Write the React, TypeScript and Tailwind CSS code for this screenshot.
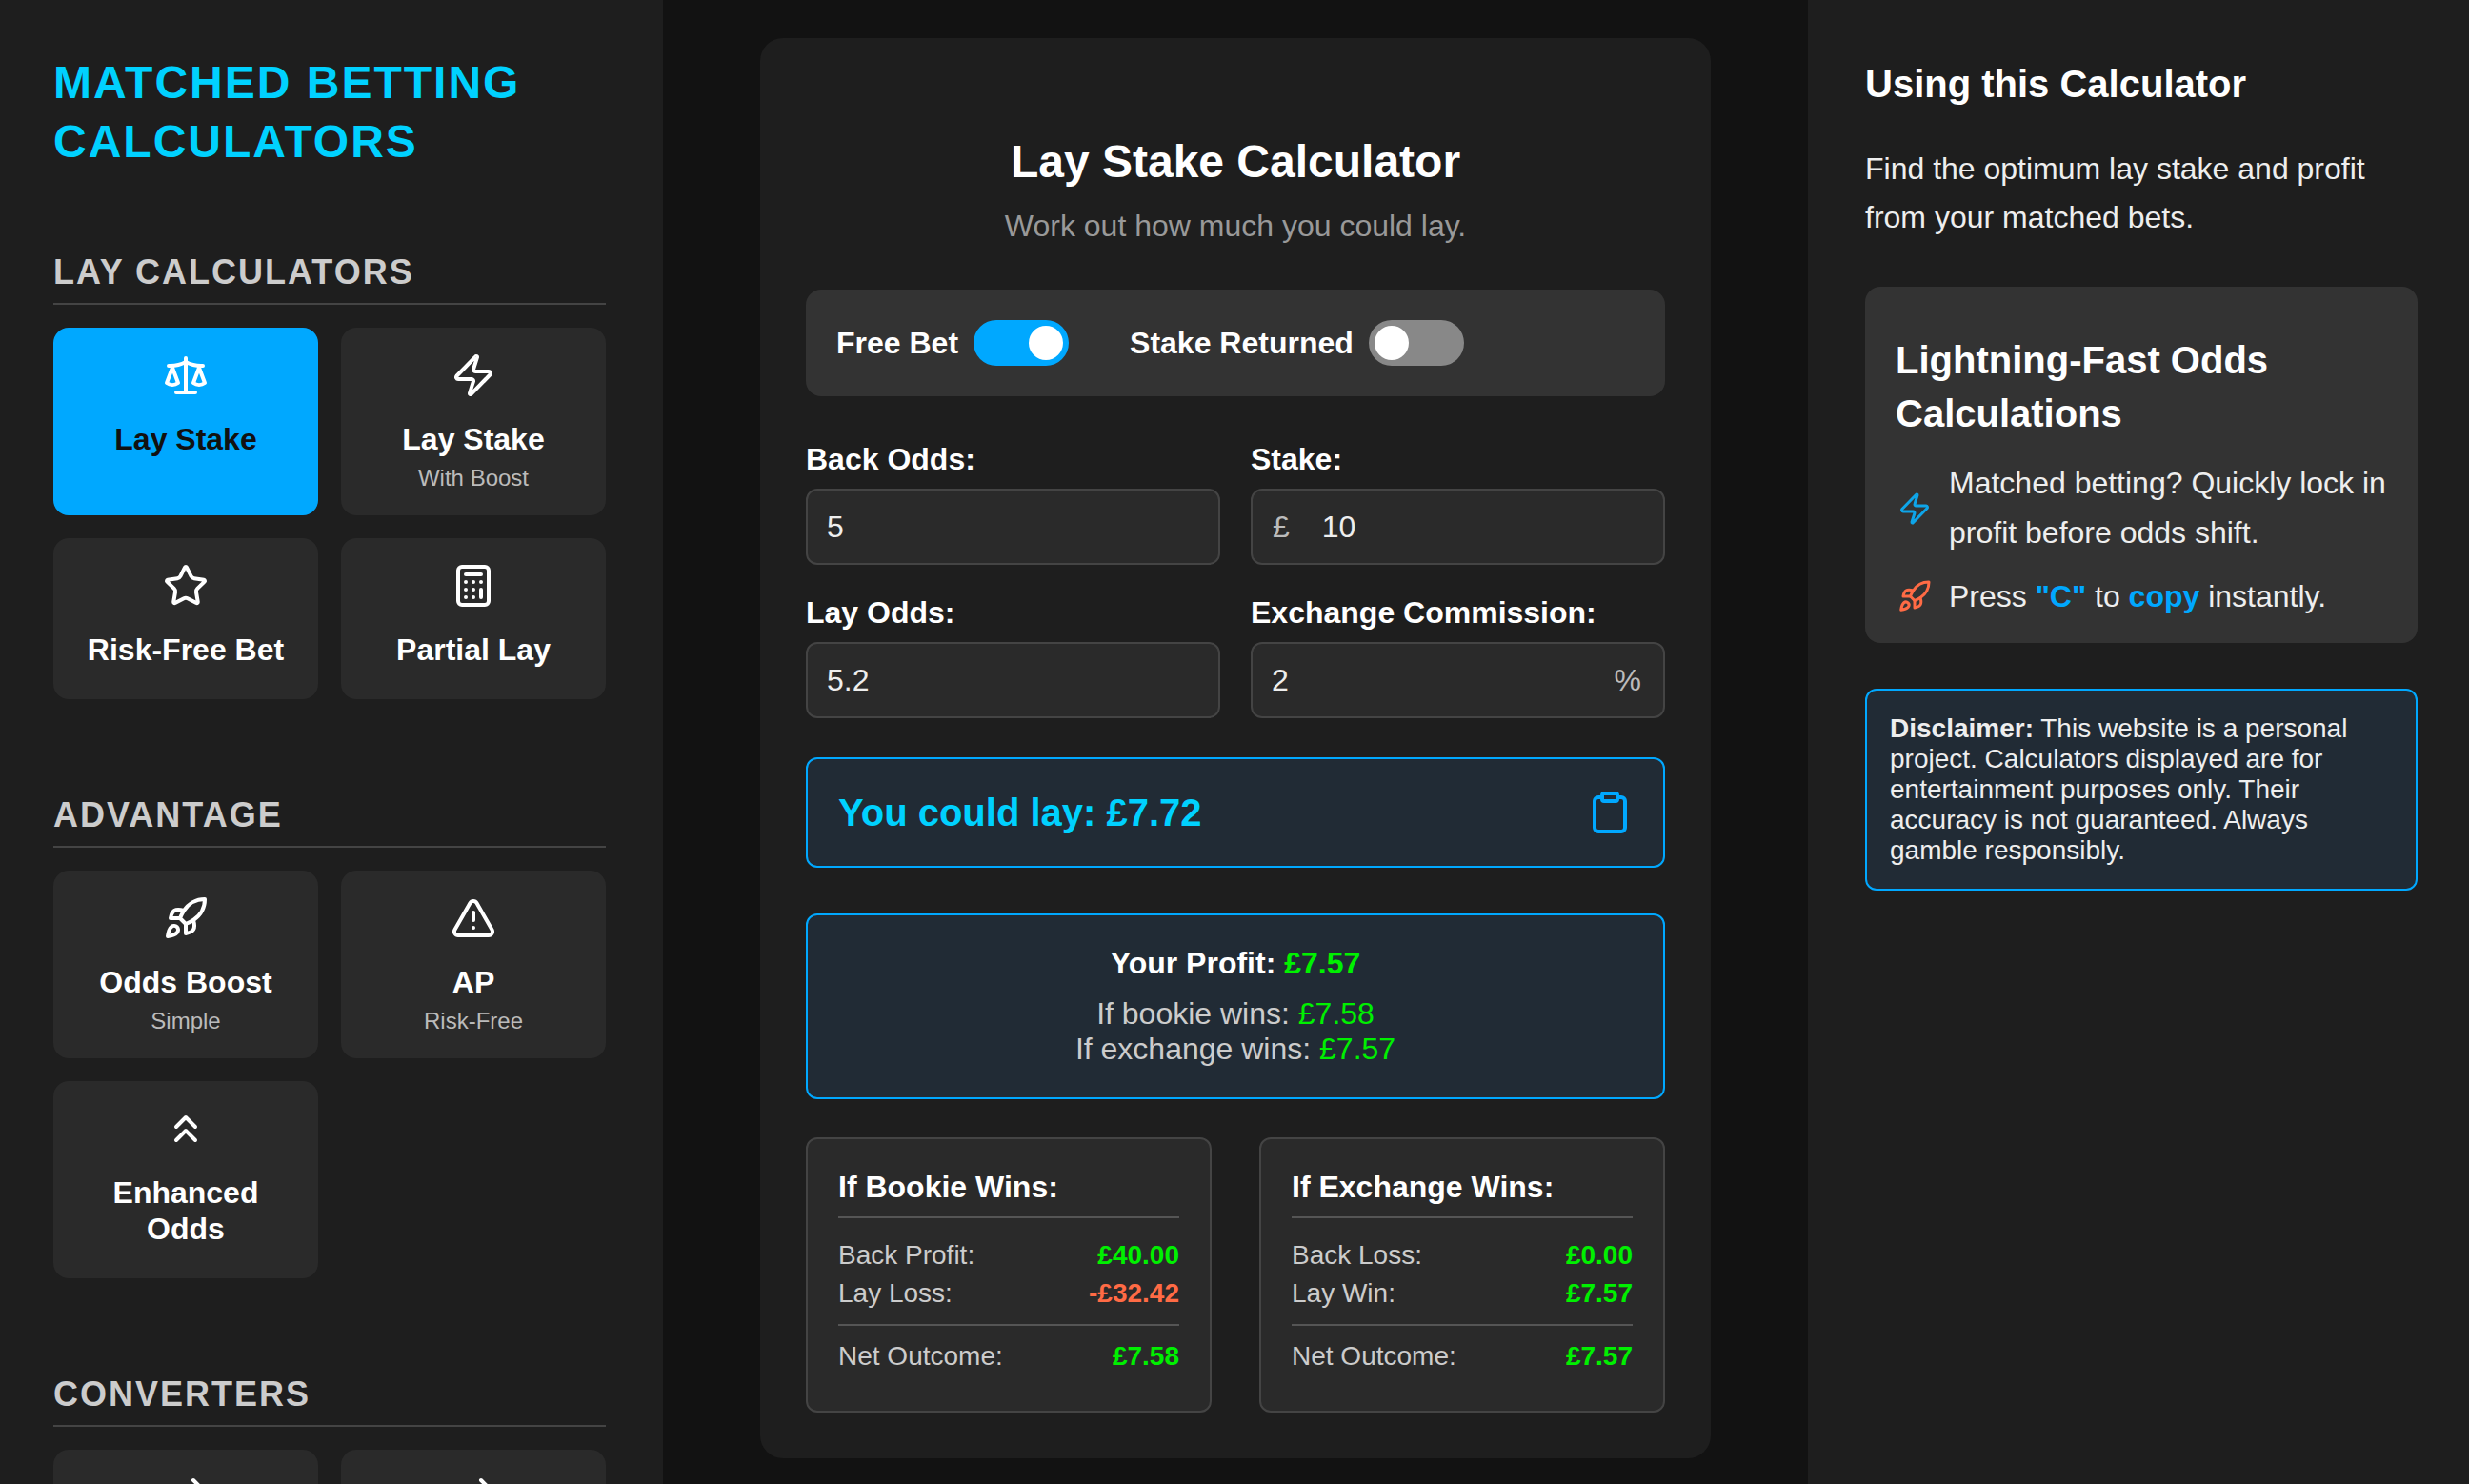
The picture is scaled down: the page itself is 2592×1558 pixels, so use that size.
import React from 'react'
import {
  ArrowRightLeft, Calculator, ChevronsUp, Clipboard, Rocket, Scale, Star, TriangleAlert, Zap,
} from 'lucide-react'

interface NavItem {
  label: string
  sub?: string
  icon: React.ReactNode
  active?: boolean
}

const navIcon = 'h-12 w-12'

const sections: { title: string; items: NavItem[] }[] = [
  {
    title: 'LAY CALCULATORS',
    items: [
      { label: 'Lay Stake', icon: <Scale className={navIcon} />, active: true },
      { label: 'Lay Stake', sub: 'With Boost', icon: <Zap className={navIcon} /> },
      { label: 'Risk-Free Bet', icon: <Star className={navIcon} /> },
      { label: 'Partial Lay', icon: <Calculator className={navIcon} /> },
    ],
  },
  {
    title: 'ADVANTAGE',
    items: [
      { label: 'Odds Boost', sub: 'Simple', icon: <Rocket className={navIcon} /> },
      { label: 'AP', sub: 'Risk-Free', icon: <TriangleAlert className={navIcon} /> },
      { label: 'Enhanced Odds', icon: <ChevronsUp className={navIcon} /> },
    ],
  },
  {
    title: 'CONVERTERS',
    items: [
      { label: 'Odds', sub: 'Converter', icon: <ArrowRightLeft className={navIcon} /> },
      { label: 'Stake', sub: 'Converter', icon: <ArrowRightLeft className={navIcon} /> },
    ],
  },
]

function NavCard({ item }: { item: NavItem }) {
  return (
    <div
      className={`flex flex-col items-center rounded-2xl px-5 pt-[26px] pb-[33px] text-center ${
        item.active ? 'bg-[#00a8ff] text-[#111111]' : 'bg-[#2a2a2a] text-white'
      }`}
    >
      <span className={`mb-6 ${item.active ? 'text-white' : ''}`}>{item.icon}</span>
      <span className="text-[32px] leading-[38px] font-bold">{item.label}</span>
      {item.sub && <span className="mt-2 -mb-[7px] text-2xl leading-[27px] text-[#bbbbbb]">{item.sub}</span>}
    </div>
  )
}

function Sidebar() {
  return (
    <aside className="h-full w-[696px] shrink-0 overflow-hidden bg-[#1e1e1e] pt-14 pr-[60px] pl-14">
      <h1 className="text-5xl leading-[62px] font-bold tracking-[2px] text-[#00d1ff]">
        MATCHED BETTING CALCULATORS
      </h1>
      <div className="mt-[85px] flex flex-col gap-[101px]">
        {sections.map((s) => (
          <section key={s.title}>
            <h2 className="mb-6 border-b-2 border-[#444444] pb-3 text-4xl leading-[41px] font-bold tracking-[2px] text-[#cccccc]">
              {s.title}
            </h2>
            <div className="grid grid-cols-2 gap-6">
              {s.items.map((item) => (
                <NavCard key={item.label + (item.sub ?? '')} item={item} />
              ))}
            </div>
          </section>
        ))}
      </div>
    </aside>
  )
}

function Toggle({ on }: { on: boolean }) {
  return (
    <span className={`flex h-12 w-[100px] items-center rounded-full px-[6px] ${on ? 'justify-end bg-[#00a8ff]' : 'bg-[#888888]'}`}>
      <span className="h-9 w-9 rounded-full bg-white" />
    </span>
  )
}

function Field({ label, value, prefix, suffix }: { label: string; value: string; prefix?: string; suffix?: string }) {
  return (
    <div>
      <label className="mb-3 block text-[32px] leading-[37px] font-bold text-white">{label}</label>
      <div className="flex h-20 items-center rounded-xl border-2 border-[#444444] bg-[#2a2a2a] px-5 text-[32px] text-[#eeeeee]">
        {prefix && <span className="mr-[34px] ml-px text-[#bbbbbb]">{prefix}</span>}
        <input readOnly value={value} aria-label={label} className="w-full min-w-0 bg-transparent outline-none" />
        {suffix && <span className="mr-[3px] text-[#bbbbbb]">{suffix}</span>}
      </div>
    </div>
  )
}

function OutcomeRow({ label, value, loss }: { label: string; value: string; loss?: boolean }) {
  return (
    <div className="flex justify-between py-1 text-[28px] leading-8">
      <span className="text-[#cccccc]">{label}</span>
      <span className={`font-bold ${loss ? 'text-[#ff6b45]' : 'text-[#00f000]'}`}>{value}</span>
    </div>
  )
}

function OutcomeCard({ title, rows, net }: { title: string; rows: { label: string; value: string; loss?: boolean }[]; net: string }) {
  return (
    <div className="rounded-xl border-2 border-[#444444] bg-[#2a2a2a] px-8 pt-8 pb-[37px]">
      <h3 className="border-b-2 border-[#555555] pb-3 text-[32px] leading-[37px] font-bold text-white">{title}</h3>
      <div className="mt-[19px] border-b-2 border-[#555555] pb-3">
        {rows.map((r) => (
          <OutcomeRow key={r.label} {...r} />
        ))}
      </div>
      <div className="mt-3">
        <OutcomeRow label="Net Outcome:" value={net} />
      </div>
    </div>
  )
}

function Main() {
  return (
    <main className="h-full flex-1 overflow-hidden bg-[#121212] pt-10">
      <div className="mx-auto w-[998px] rounded-[24px] bg-[#1e1e1e] px-12 pt-[102px] pb-12">
        <h2 className="text-center text-5xl leading-[55px] font-bold text-white">Lay Stake Calculator</h2>
        <p className="mt-[22px] text-center text-[32px] leading-[37px] text-[#999999]">Work out how much you could lay.</p>

        <div className="mt-12 flex h-28 items-center rounded-2xl bg-[#333333] px-8 text-[32px] font-bold text-white">
          <span className="mr-4">Free Bet</span>
          <Toggle on />
          <span className="mr-4 ml-16">Stake Returned</span>
          <Toggle on={false} />
        </div>

        <div className="mt-12 grid grid-cols-2 gap-x-8 gap-y-8">
          <Field label="Back Odds:" value="5" />
          <Field label="Stake:" value="10" prefix="£" />
          <Field label="Lay Odds:" value="5.2" />
          <Field label="Exchange Commission:" value="2" suffix="%" />
        </div>

        <div className="mt-[41px] flex h-[116px] items-center justify-between rounded-xl border-2 border-[#00a8ff] bg-[#212b35] pr-8 pl-8">
          <span className="text-[40px] font-bold text-[#00d1ff]">You could lay: £7.72</span>
          <Clipboard className="h-12 w-12 text-[#00a8ff]" />
        </div>

        <div className="mt-12 rounded-xl border-2 border-[#00a8ff] bg-[#212b35] p-8 text-center">
          <p className="text-[32px] leading-[37px] font-bold text-white">
            Your Profit: <span className="text-[#00f000]">£7.57</span>
          </p>
          <p className="mt-4 text-[32px] leading-[37px] text-[#cccccc]">
            If bookie wins: <span className="text-[#00f000]">£7.58</span>
          </p>
          <p className="text-[32px] leading-[37px] text-[#cccccc]">
            If exchange wins: <span className="text-[#00f000]">£7.57</span>
          </p>
        </div>

        <div className="mt-10 grid grid-cols-2 gap-x-[50px]">
          <OutcomeCard
            title="If Bookie Wins:"
            rows={[
              { label: 'Back Profit:', value: '£40.00' },
              { label: 'Lay Loss:', value: '-£32.42', loss: true },
            ]}
            net="£7.58"
          />
          <OutcomeCard
            title="If Exchange Wins:"
            rows={[
              { label: 'Back Loss:', value: '£0.00' },
              { label: 'Lay Win:', value: '£7.57' },
            ]}
            net="£7.57"
          />
        </div>
      </div>
    </main>
  )
}

function InfoPanel() {
  return (
    <aside className="h-full w-[694px] shrink-0 overflow-hidden bg-[#1e1e1e] pt-[65px] pr-[54px] pl-[60px]">
      <h2 className="text-[40px] leading-[46px] font-bold text-white">Using this Calculator</h2>
      <p className="mt-[41px] text-[32px] leading-[51.2px] text-[#eeeeee]">
        Find the optimum lay stake and profit from your matched bets.
      </p>

      <div className="mt-[47px] rounded-2xl bg-[#333333] px-8 pt-[49px] pb-[23px]">
        <h3 className="text-[40px] leading-[56px] font-bold text-white">Lightning-Fast Odds Calculations</h3>
        <div className="mt-5 flex items-center gap-[18px]">
          <Zap className="ml-[2px] h-9 w-9 shrink-0 text-[#0ea5e9]" />
          <p className="text-[32px] leading-[51.2px] text-[#eeeeee]">Matched betting? Quickly lock in profit before odds shift.</p>
        </div>
        <div className="mt-4 flex items-center gap-[18px]">
          <Rocket className="ml-[2px] h-9 w-9 shrink-0 text-[#ff6b45]" />
          <p className="text-[32px] leading-[51.2px] text-[#eeeeee]">
            Press <b className="text-[#00a8ff]">"C"</b> to <b className="text-[#00a8ff]">copy</b> instantly.
          </p>
        </div>
      </div>

      <div className="mt-12 rounded-xl border-2 border-[#00a8ff] bg-[#212b35] px-6 py-6 text-[28px] leading-8 text-[#eeeeee]">
        <b>Disclaimer:</b> This website is a personal project. Calculators displayed are for entertainment purposes only. Their accuracy is not guaranteed. Always gamble responsibly.
      </div>
    </aside>
  )
}

export default function App() {
  return (
    <div className="flex h-screen overflow-hidden font-['Liberation_Sans',Arial,sans-serif]">
      <Sidebar />
      <Main />
      <InfoPanel />
    </div>
  )
}
